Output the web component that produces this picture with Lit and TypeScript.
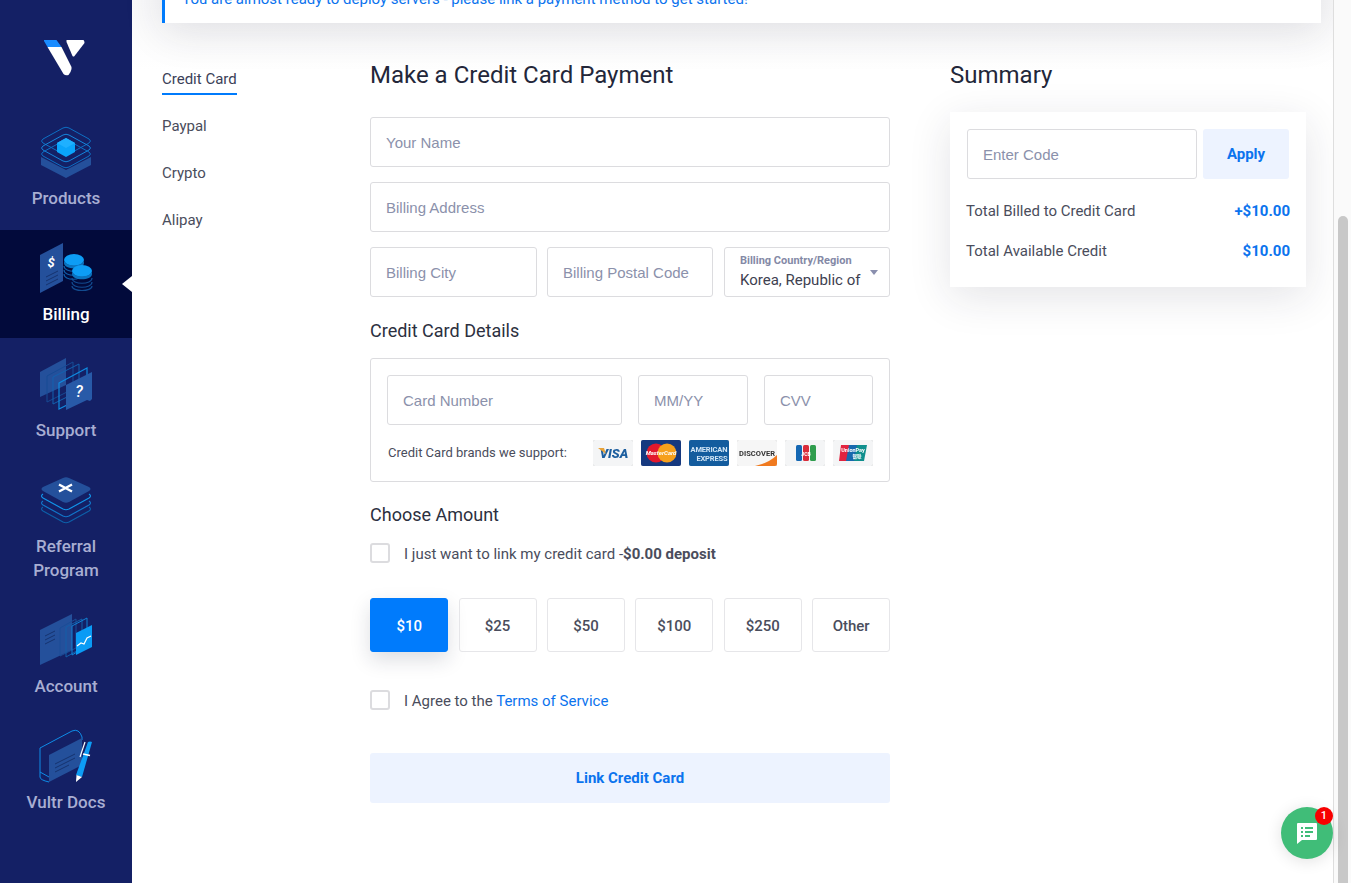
import { LitElement, css, html, svg } from 'lit';
import { customElement } from 'lit/decorators.js';
import { classMap } from 'lit/directives/class-map.js';

const PANEL = '#24509b';
const SKY = '#0d9df5';

const ICONS = {
  products: svg`
    <path d="M5 33v8l25 13 25-13v-8L30 46z" fill="${PANEL}"/>
    <g fill="none" stroke-width="1">
      <path d="M7 27L27 16q3-1.500 6 0l20 11q3 2 0 4L33 42q-3 1.500-6 0L7 31q-3-2 0-4z" stroke="#0d6fc4" transform="translate(0 -12)"/>
      <path d="M7 27L27 16q3-1.500 6 0l20 11q3 2 0 4L33 42q-3 1.500-6 0L7 31q-3-2 0-4z" stroke="#1585dc" transform="translate(0 -5)"/>
      <path d="M7 27L27 16q3-1.500 6 0l20 11q3 2 0 4L33 42q-3 1.500-6 0L7 31q-3-2 0-4z" stroke="#0d6fc4" transform="translate(0 1)"/>
    </g>
    <path d="M30 14l9 5v9l-9 5-9-5v-9z" fill="#0aa4fb"/>
    <path d="M30 14l9 5-9 5-9-5z" fill="#1fb0ff"/>`,
  billing: svg`
    <path d="M4 15l23-12v38L4 53z" fill="${PANEL}"/>
    <text x="15" y="27" text-anchor="middle" font-size="13" font-weight="700" font-style="italic" fill="#fff">$</text>
    <path d="M10 37l12-6M10 41l12-6M10 45l12-6" stroke="#16336f" stroke-width="1" fill="none"/>
    <g fill="none" stroke="#0f5ea8" stroke-width="1.200">
      <path d="M28 26c0 7 20 7 20 0M28 30c0 7 20 7 20 0M28 34c0 7 18 7 18 0"/>
    </g>
    <ellipse cx="38" cy="20" rx="10" ry="6" fill="${SKY}"/>
    <path d="M28 20v3c0 7 20 7 20 0v-3c0 7-20 7-20 0z" fill="#0b74c0"/>
    <g fill="none" stroke="#124b8f" stroke-width="1.200">
      <path d="M36 38c0 7 20 7 20 0M36 42c0 7 20 7 20 0M36 46c0 6 20 6 20 0"/>
    </g>
    <ellipse cx="46" cy="31" rx="10" ry="6" fill="${SKY}"/>
    <path d="M36 31v3c0 7 20 7 20 0v-3c0 7-20 7-20 0z" fill="#0b74c0"/>`,
  support: svg`
    <path d="M4 16l26-14v27L4 41z" fill="${PANEL}"/>
    <g fill="none" stroke-width="1">
      <path d="M11 20L37 6v27L11 46z" stroke="#164a94"/>
      <path d="M17 21L43 8v27L17 48z" stroke="#1261b0"/>
      <path d="M23 27L51 12v27L23 53z" stroke="#0f8ae0" stroke-width="1.200"/>
    </g>
    <path d="M30 29l26-13v27l-2 2-3-1-21 10z" fill="#285aa8"/>
    <text x="43" y="41" text-anchor="middle" font-size="16" font-weight="500" font-style="italic" fill="#fff">?</text>`,
  referral: svg`
    <g fill="none" stroke-width="1.200">
      <path d="M7 39l20 11q3 1.500 6 0l20-11q3-2 0-4M7 35q-3 2 0 4" stroke="#0d5fa8"/>
      <path d="M7 33l20 11q3 1.500 6 0l20-11q3-2 0-4M7 29q-3 2 0 4" stroke="#1175c9"/>
      <path d="M7 26l20 11q3 1.500 6 0l20-11q3-2 0-4M7 22q-3 2 0 4" stroke="#1194ea"/>
    </g>
    <path d="M7 15L27 6q3-1.500 6 0l20 9q3 2 0 4L33 30q-3 1.500-6 0L7 19q-3-2 0-4z" fill="${PANEL}"/>
    <path d="M23 12.500l13 7M36 12.500l-13 7" stroke="#fff" stroke-width="2.400" fill="none"/>`,
  account: svg`
    <path d="M4 18L36 2v36L4 53z" fill="${PANEL}"/>
    <path d="M9 24l10-5M9 28l10-5M9 32l10-5" stroke="#16336f" stroke-width="1" fill="none"/>
    <g fill="none" stroke-width="1">
      <path d="M24 16L40 7v29l-16 8z" stroke="#1a4d97"/>
      <path d="M30 15l16-8v29l-16 9z" stroke="#125ea9"/>
      <path d="M36 14l15-8v28l-15 9z" stroke="#1180d4"/>
    </g>
    <path d="M40 21l16-8v22l-16 8z" fill="#0a9bf5"/>
    <path d="M41 34l4-3 3 1 3-6 4-2" stroke="#fff" stroke-width="1.200" fill="none"/>`,
  docs: svg`
    <path d="M4 20L36 3q7-3 10 6v3M4 20v29q0 3 9 5M4 44l9 5" fill="none" stroke="#0e8ce8" stroke-width="1"/>
    <path d="M13 27l33-17v27L13 54z" fill="${PANEL}"/>
    <path d="M19 36l20-10M19 40l20-10M19 44l14-7" stroke="#16336f" stroke-width="1" fill="none"/>
    <path d="M44 29l5-15" stroke="#fff" stroke-width="1.200" fill="none"/>
    <path d="M52 14q2-1 4 0L46 49l-6-2z" fill="${SKY}"/>
    <path d="M40.500 47l5.500 2-6 5z" fill="#fff"/>
    <path d="M47 26l7 1.500" stroke="#fff" stroke-width="1.500"/>`,
};

const NAV = [
  { icon: ICONS.products, lines: ['Products'] },
  { icon: ICONS.billing, lines: ['Billing'], active: true },
  { icon: ICONS.support, lines: ['Support'] },
  { icon: ICONS.referral, lines: ['Referral', 'Program'] },
  { icon: ICONS.account, lines: ['Account'] },
  { icon: ICONS.docs, lines: ['Vultr Docs'] },
];

const TABS = ['Credit Card', 'Paypal', 'Crypto', 'Alipay'];
const AMOUNTS = ['$10', '$25', '$50', '$100', '$250', 'Other'];

const sans = 'Roboto, sans-serif';

const BRANDS = [
  svg`<rect width="40" height="26" rx="2" fill="#f4f5f6"/>
    <text x="21" y="18" text-anchor="middle" font-size="13" font-weight="900" font-style="italic" fill="#1d5f9f" font-family="${sans}">VISA</text>
    <path d="M5 8h6l2 6z" fill="#e8a33a"/>`,
  svg`<rect width="40" height="26" rx="2" fill="#16397f"/>
    <circle cx="15" cy="13" r="9.500" fill="#e3182d"/><circle cx="26" cy="13" r="9.500" fill="#f6a01c"/>
    <text x="20" y="15" text-anchor="middle" font-size="6" font-weight="700" font-style="italic" fill="#fff" font-family="${sans}">MasterCard</text>`,
  svg`<rect width="40" height="26" rx="2" fill="#135c9e"/>
    <text x="20" y="12" text-anchor="middle" font-size="7.500" font-weight="700" fill="#cfe4f5" font-family="${sans}" textLength="37">AMERICAN</text>
    <text x="23" y="21" text-anchor="middle" font-size="7.500" font-weight="700" fill="#cfe4f5" font-family="${sans}" textLength="31">EXPRESS</text>`,
  svg`<rect width="40" height="26" rx="2" fill="#f6f6f6"/>
    <path d="M40 15v9q0 2-2 2H18q14-3 22-11z" fill="#f07a1f"/>
    <text x="20" y="16" text-anchor="middle" font-size="7.500" font-weight="700" fill="#333" font-family="${sans}" textLength="36">DISCOVER</text>`,
  svg`<rect width="40" height="26" rx="2" fill="#f4f5f6"/>
    <rect x="11" y="5" width="6" height="16" rx="1.500" fill="#1467b3"/>
    <rect x="18" y="5" width="6" height="16" rx="1.500" fill="#d92c3a"/>
    <rect x="25" y="5" width="6" height="16" rx="1.500" fill="#2f9d4d"/>
    <text x="21" y="16" text-anchor="middle" font-size="5" font-weight="700" fill="#fff" font-family="${sans}">JCB</text>`,
  svg`<rect width="40" height="26" rx="2" fill="#f4f5f6"/>
    <path d="M8 5h9l-3 16H6z" fill="#e2233f"/><path d="M16 5h9l-3 16h-9z" fill="#1769ae"/><path d="M24 5h10l-3 16h-10z" fill="#0f8f8d"/>
    <text x="20" y="12" text-anchor="middle" font-size="5.500" font-weight="700" fill="#fff" font-family="${sans}">UnionPay</text>
    <text x="24" y="18" text-anchor="middle" font-size="4.500" font-weight="700" fill="#fff" font-family="'Noto Sans CJK SC', ${sans}">银联</text>`,
];

@customElement('app-root')
export class AppRoot extends LitElement {
  static styles = css`
    :host {
      display: flex;
      width: 100%;
      height: 883px;
      overflow: hidden;
      position: relative;
      background: #fff;
      font-family: Roboto, sans-serif;
      color: #3e4150;
    }

    .sidebar {
      flex: 0 0 132px;
      background: #142065;
      display: flex;
      flex-direction: column;
    }

    .logo {
      height: 114px;
      display: flex;
      justify-content: center;
    }

    .logo svg {
      margin-top: 40px;
    }

    .nav-item {
      position: relative;
      padding: 10px 0 12px;
      margin-bottom: 8px;
      display: flex;
      flex-direction: column;
      align-items: center;
      color: #a8aed2;
      font-size: 17px;
      font-weight: 500;
      line-height: 24px;
      text-align: center;
    }

    .nav-item svg {
      display: block;
      margin-bottom: 6px;
      font-family: Roboto, sans-serif;
    }

    .nav-item.active {
      background: #020a3b;
      color: #fff;
    }

    .nav-item.active::after {
      content: '';
      position: absolute;
      right: 0;
      top: 46px;
      border: 8px solid transparent;
      border-left: 0;
      border-right: 10px solid #fff;
    }

    .main {
      flex: 1;
      min-width: 0;
      padding-left: 30px;
      padding-right: 12px;
      background: linear-gradient(#f9f9fa, #fff 70px);
    }

    .alert {
      height: 60px;
      margin-top: -37px;
      box-sizing: border-box;
      background: #fff;
      border-left: 3px solid #007bfc;
      padding: 27px 0 0 17px;
      color: #0b73ee;
      font-size: 15px;
      line-height: 18px;
      box-shadow: 0 10px 40px rgba(30, 35, 60, 0.12);
    }

    .content {
      display: flex;
      padding-top: 35px;
    }

    .tabs {
      flex: 0 0 208px;
      display: flex;
      flex-direction: column;
      align-items: flex-start;
      gap: 19px;
      padding-top: 9px;
    }

    .tab {
      font-size: 15px;
      line-height: 24px;
      padding-bottom: 2px;
      border-bottom: 2px solid transparent;
      color: #4a4d5c;
    }

    .tab.active {
      color: #3b3f58;
      border-bottom-color: #007bfc;
    }

    .form {
      flex: 0 0 520px;
    }

    h1 {
      margin: 0;
      font-size: 24px;
      font-weight: 400;
      line-height: 34px;
      color: #23273a;
    }

    h2 {
      margin: 0;
      font-size: 18px;
      font-weight: 400;
      line-height: 24px;
      color: #2c3040;
    }

    .stack {
      display: flex;
      flex-direction: column;
      gap: 15px;
      margin-top: 25px;
    }

    .three {
      display: grid;
      grid-template-columns: 167px 166px 1fr;
      gap: 10px;
    }

    input {
      display: block;
      width: 100%;
      min-width: 0;
      height: 50px;
      box-sizing: border-box;
      padding: 0 15px;
      border: 1px solid #dcdcdf;
      border-radius: 3px;
      background: #fff;
      font-family: 'Liberation Sans', Arial, sans-serif;
      font-size: 15px;
      color: #3e4150;
      outline: none;
    }

    input::placeholder {
      color: #8b91ab;
      opacity: 1;
    }

    .select {
      position: relative;
      margin-left: 1px;
      height: 50px;
      box-sizing: border-box;
      border: 1px solid #dcdcdf;
      border-radius: 3px;
      padding: 6px 0 0 15px;
    }

    .select-label {
      font-size: 11px;
      font-weight: 700;
      line-height: 14px;
      color: #8489a6;
    }

    .select-value {
      font-size: 15px;
      line-height: 22px;
      margin-top: 1px;
      color: #3e4150;
    }

    .select::after {
      content: '';
      position: absolute;
      right: 11px;
      top: 22px;
      border: 4px solid transparent;
      border-top: 5px solid #8a8fae;
      border-bottom: 0;
    }

    .section-title {
      margin: 22px 0 15px;
    }

    .amount-title {
      margin-top: 21px;
    }

    .card-box {
      border: 1px solid #dcdcdf;
      border-radius: 3px;
      padding: 16px 16px 15px;
    }

    .card-row {
      display: grid;
      grid-template-columns: 235px 110px 1fr;
      gap: 16px;
    }

    .brands {
      display: flex;
      align-items: center;
      justify-content: space-between;
      margin-top: 15px;
      font-size: 13px;
      color: #4a4d5c;
    }

    .brands span {
      margin-left: 1px;
      padding-bottom: 2px;
    }

    .brand-list {
      display: flex;
      gap: 8px;
    }

    .brand-list svg {
      display: block;
      filter: drop-shadow(0 0 0.5px rgba(0, 0, 0, 0.3));
    }

    .check-row {
      display: flex;
      align-items: center;
      gap: 14px;
      font-size: 15px;
      color: #4a4d5c;
    }

    .check-row > span:last-child {
      padding-top: 2px;
    }

    .check {
      width: 20px;
      height: 20px;
      box-sizing: border-box;
      border: 2px solid #dcdcdf;
      border-radius: 3px;
    }

    .deposit {
      margin-top: 16px;
      height: 20px;
    }

    .deposit b {
      font-weight: 700;
    }

    .amounts {
      display: flex;
      justify-content: space-between;
      margin: 35px -0.2px 0 0.2px;
    }

    .amount {
      width: 78px;
      height: 54px;
      box-sizing: border-box;
      padding-top: 2px;
      display: flex;
      align-items: center;
      justify-content: center;
      border: 1px solid #e6e6e9;
      border-radius: 3px;
      font-size: 15px;
      font-weight: 500;
      color: #4a4d5c;
    }

    .amount.active {
      background: #007bfc;
      border-color: #007bfc;
      color: #fff;
      box-shadow: 0 8px 20px rgba(30, 35, 60, 0.15);
    }

    .agree {
      margin-top: 38px;
      height: 20px;
    }

    .agree a {
      color: #0b73ee;
      text-decoration: none;
    }

    .submit {
      margin-top: 43px;
      height: 50px;
      display: flex;
      align-items: center;
      justify-content: center;
      background: #edf3ff;
      border-radius: 3px;
      color: #0b73ee;
      font-size: 15px;
      font-weight: 700;
    }

    .side {
      flex: 0 0 356px;
      margin-left: 60px;
    }

    .summary {
      margin-top: 20px;
      height: 175px;
      box-sizing: border-box;
      padding: 17px 16px 0;
      background: #fff;
      box-shadow: 0 10px 40px rgba(30, 35, 60, 0.12);
    }

    .code {
      display: flex;
      gap: 6px;
      margin-left: 1px;
      margin-right: 1px;
    }

    .code input {
      flex: 0 0 230px;
      width: 230px;
    }

    .apply {
      flex: 1;
      display: flex;
      align-items: center;
      justify-content: center;
      background: #edf3ff;
      border-radius: 3px;
      color: #0b73ee;
      font-size: 15px;
      font-weight: 700;
    }

    .total {
      display: flex;
      justify-content: space-between;
      font-size: 15px;
      line-height: 20px;
      color: #4a4d5c;
      margin-top: 20px;
    }

    .code + .total {
      margin-top: 22px;
    }

    .total b {
      color: #0b73ee;
      font-weight: 700;
    }

    .scrollbar {
      flex: 0 0 18px;
      box-sizing: border-box;
      border-left: 1px solid #dedede;
      background: #fafafa;
      position: relative;
    }

    .thumb {
      position: absolute;
      left: 4px;
      top: 216px;
      bottom: -8px;
      width: 10px;
      border-radius: 5px;
      background: #c8c8c8;
    }

    .chat {
      position: absolute;
      left: 1281px;
      top: 807px;
      width: 52px;
      height: 52px;
      border-radius: 50%;
      background: #40bd78;
      display: flex;
      align-items: center;
      justify-content: center;
      box-shadow: 0 2px 16px rgba(0, 0, 0, 0.12);
    }

    .badge {
      position: absolute;
      right: 0;
      top: 0;
      width: 18px;
      height: 18px;
      border-radius: 50%;
      background: #f70000;
      color: #fff;
      font-size: 11px;
      font-weight: 500;
      line-height: 18px;
      text-align: center;
    }
  `;

  render() {
    return html`
      <aside class="sidebar">
        <div class="logo">
          <svg width="44" height="36" viewBox="1.500 0 44 36">
            <path d="M1 0h13l5 7H5z" fill="#1a8cff"/>
            <path d="M5 7h14l10 20q.5 2-1 5l-2 3q-3 1-5-1z" fill="#fff"/>
            <path d="M24 0h17q1 1 1 3L32 16q-1 1-2 0L24 2z" fill="#fff"/>
          </svg>
        </div>
        ${NAV.map(
          (item) => html`
            <div class=${classMap({ 'nav-item': true, active: !!item.active })}>
              <svg width="60" height="56" viewBox="0 0 60 56">${item.icon}</svg>
              ${item.lines.map((line) => html`<div>${line}</div>`)}
            </div>
          `
        )}
      </aside>

      <main class="main">
        <div class="alert">You are almost ready to deploy servers - please link a payment method to get started!</div>
        <div class="content">
          <nav class="tabs">
            ${TABS.map(
              (tab, i) => html`<div class=${classMap({ tab: true, active: i === 0 })}>${tab}</div>`
            )}
          </nav>

          <section class="form">
            <h1>Make a Credit Card Payment</h1>
            <div class="stack">
              <input placeholder="Your Name" />
              <input placeholder="Billing Address" />
              <div class="three">
                <input placeholder="Billing City" />
                <input placeholder="Billing Postal Code" />
                <div class="select">
                  <div class="select-label">Billing Country/Region</div>
                  <div class="select-value">Korea, Republic of</div>
                </div>
              </div>
            </div>

            <h2 class="section-title">Credit Card Details</h2>
            <div class="card-box">
              <div class="card-row">
                <input placeholder="Card Number" />
                <input placeholder="MM/YY" />
                <input placeholder="CVV" />
              </div>
              <div class="brands">
                <span>Credit Card brands we support:</span>
                <div class="brand-list">
                  ${BRANDS.map(
                    (brand) => html`<svg width="40" height="26" viewBox="0 0 40 26">${brand}</svg>`
                  )}
                </div>
              </div>
            </div>

            <h2 class="amount-title">Choose Amount</h2>
            <div class="check-row deposit">
              <span class="check"></span>
              <span>I just want to link my credit card -<b>$0.00 deposit</b></span>
            </div>

            <div class="amounts">
              ${AMOUNTS.map(
                (amount, i) => html`<div class=${classMap({ amount: true, active: i === 0 })}>${amount}</div>`
              )}
            </div>

            <div class="check-row agree">
              <span class="check"></span>
              <span>I Agree to the <a>Terms of Service</a></span>
            </div>

            <div class="submit">Link Credit Card</div>
          </section>

          <section class="side">
            <h1>Summary</h1>
            <div class="summary">
              <div class="code">
                <input placeholder="Enter Code" />
                <div class="apply">Apply</div>
              </div>
              <div class="total"><span>Total Billed to Credit Card</span><b>+$10.00</b></div>
              <div class="total"><span>Total Available Credit</span><b>$10.00</b></div>
            </div>
          </section>
        </div>
      </main>

      <div class="scrollbar"><div class="thumb"></div></div>

      <div class="chat">
        <svg width="24" height="24" viewBox="0 0 24 24">
          <path d="M3 2h18q1 0 1 1v15q0 1-1 1H7l-5 4V3q0-1 1-1z" fill="#fff"/>
          <path d="M6 6h2v2H6zM10 6h8v2h-8zM6 10h2v2H6zM10 10h8v2h-8zM6 14h2v2H6zM10 14h5v2h-5z" fill="#40bd78"/>
        </svg>
        <div class="badge">1</div>
      </div>
    `;
  }
}
